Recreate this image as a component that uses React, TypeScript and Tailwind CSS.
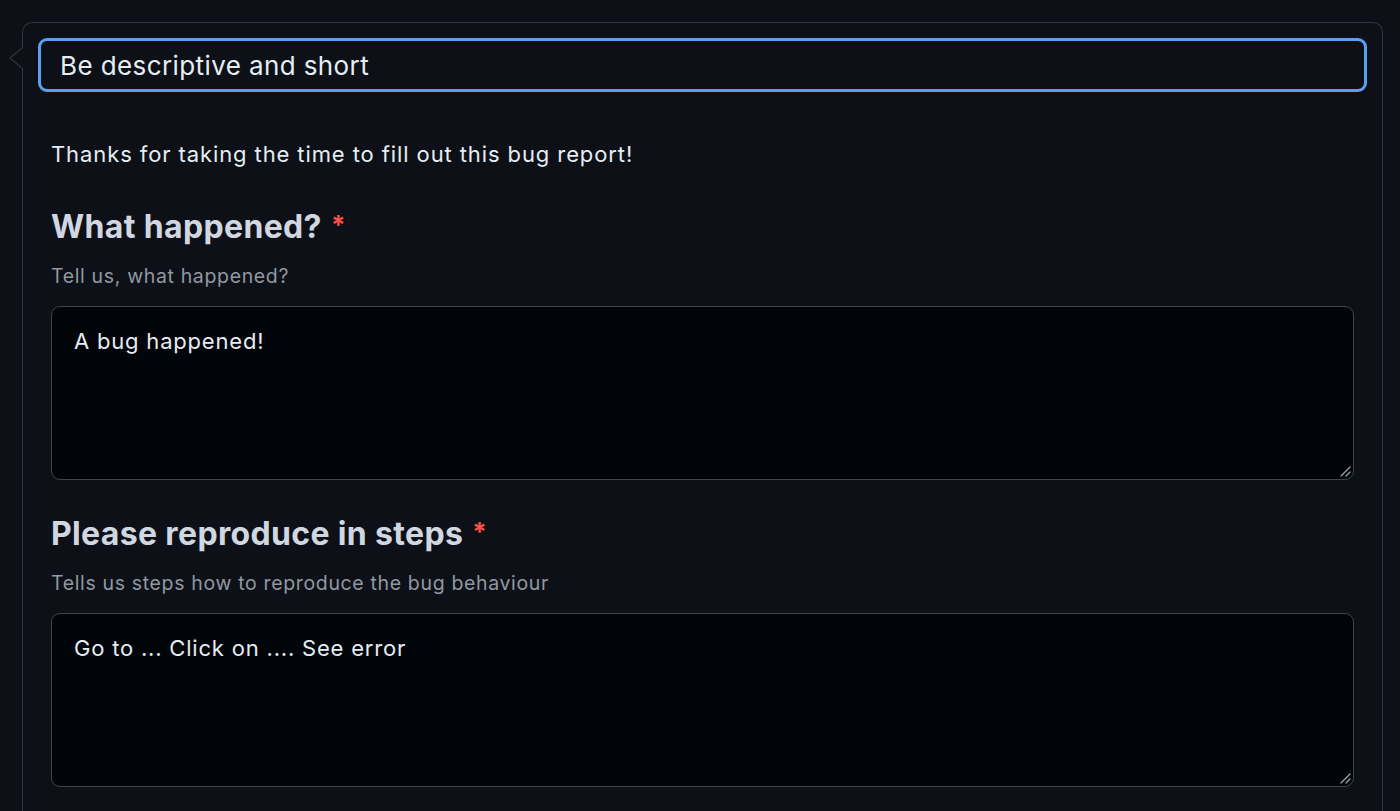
const font = { fontFamily: 'Inter, "Noto Sans", sans-serif' };

function Grip() {
  return (
    <svg className="pointer-events-none absolute right-[3px] bottom-[3px]" width="12" height="12" viewBox="0 0 12 12">
      <path d="M11 2 L2 11 M11 7 L7 11" stroke="#9ba3ad" strokeWidth="1.3" strokeLinecap="round" />
    </svg>
  );
}

function Field({ title, hint, value, first }: { title: string; hint: string; value: string; first?: boolean }) {
  return (
    <div className={first ? 'mt-[37px]' : 'mt-[34px]'}>
      <h3 className="m-0 text-[32px] leading-[40px] font-bold text-[#d1d7e0] tracking-[0.35px]">
        {title}
        <span className="relative -top-[4px] ml-[9px] text-[#f85149] text-[26px]">*</span>
      </h3>
      <p className="m-0 mt-[13px] text-[19.5px] leading-[28px] tracking-[0.65px] text-[#9198a1]">{hint}</p>
      <div className="relative mt-4">
        <textarea
          readOnly
          value={value}
          className="block w-full h-[174px] resize-none rounded-[9px] border border-[#3d444d] bg-[#010409] px-[22px] pt-[19px] text-[22px] leading-[30px] tracking-[0.8px] text-[#e6edf3] outline-none"
          style={font}
        />
        <Grip />
      </div>
    </div>
  );
}

export default function App() {
  return (
    <div className="min-h-[811px] h-[811px] overflow-hidden bg-[#0d1117] pt-[22px] pl-[22px] pr-[17px]" style={font}>
      <div className="relative h-[900px] rounded-t-[10px] border border-[#30363d] border-b-0">
        <svg className="absolute left-[-14px] top-[24px]" width="15" height="22" viewBox="0 0 15 22">
          <path d="M14 0 L1 11 L14 22" fill="#0d1117" stroke="#30363d" strokeWidth="1.2" />
          <rect x="14" y="0" width="1" height="22" fill="#0d1117" />
        </svg>
        <div className="px-[15px] pt-[15px]">
          <input
            readOnly
            value="Be descriptive and short"
            className="block w-full h-[54px] rounded-[9px] border-[3px] border-[#5a9ff0] bg-[#0d1117] px-[19px] text-[26px] tracking-[0.4px] text-[#e6edf3] outline-none"
            style={font}
          />
        </div>
        <div className="px-[28px]">
          <p className="m-0 mt-[46px] text-[22px] leading-[32px] tracking-[0.9px] text-[#e6edf3]">
            Thanks for taking the time to fill out this bug report!
          </p>
          <Field first title="What happened?" hint="Tell us, what happened?" value="A bug happened!" />
          <Field
            title="Please reproduce in steps"
            hint="Tells us steps how to reproduce the bug behaviour"
            value="Go to ... Click on .... See error"
          />
        </div>
      </div>
    </div>
  );
}
